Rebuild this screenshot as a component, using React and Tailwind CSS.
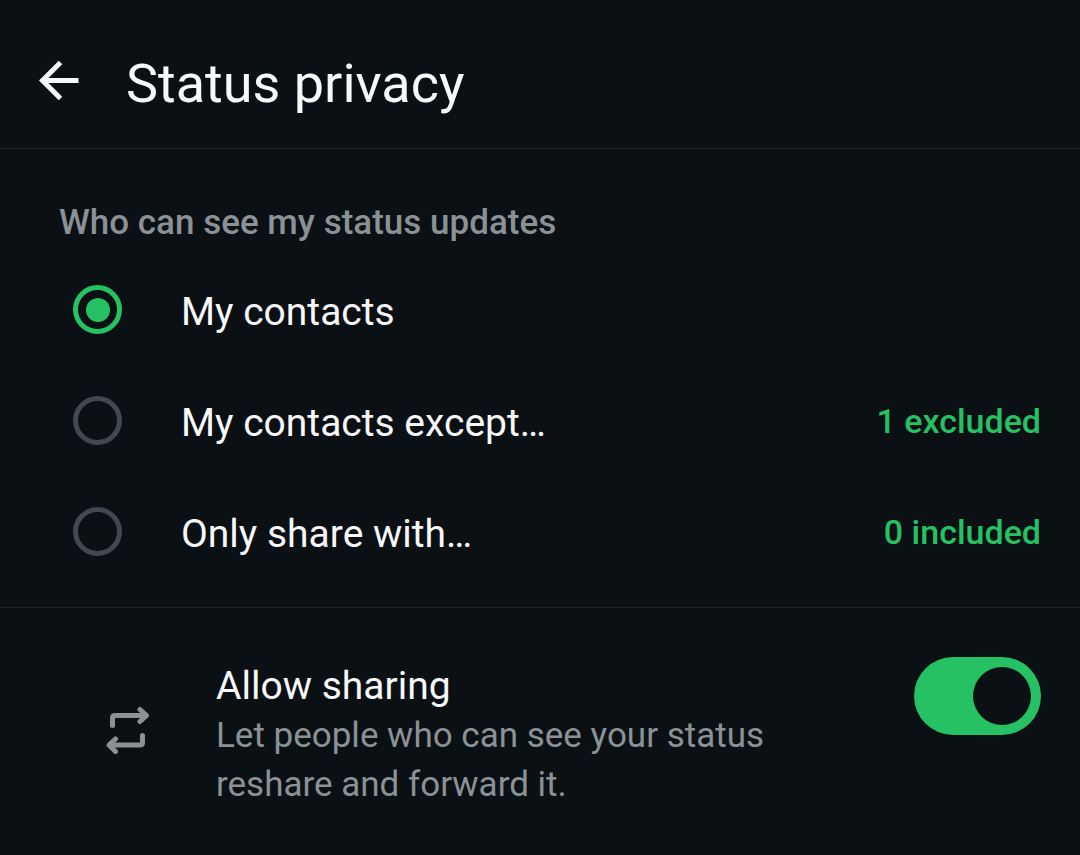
import { useState } from 'react'

const OPTIONS = [
  { id: 'contacts', label: 'My contacts' },
  { id: 'except', label: 'My contacts except…', action: '1 excluded' },
  { id: 'only', label: 'Only share with…', action: '0 included' },
]

function BackIcon() {
  return (
    <svg
      className="size-12"
      viewBox="0 0 48 48"
      fill="none"
      stroke="currentColor"
      strokeWidth="5"
      aria-hidden="true"
    >
      <path d="M43.500 24.500H9M25.500 6.500L7.500 24.500L25.500 42.500" />
    </svg>
  )
}

function ReshareIcon() {
  return (
    <svg
      className="size-12 shrink-0"
      viewBox="0 0 48 48"
      fill="none"
      stroke="currentColor"
      strokeWidth="5"
      strokeLinejoin="round"
      strokeLinecap="round"
      aria-hidden="true"
    >
      <path d="M8.500 19.500V12Q8.500 9.500 11 9.500H41" />
      <path d="M36 3.500L42.500 9.500L36 15.500" />
      <path d="M38.500 29.500V36.500Q38.500 39 36 39H7" />
      <path d="M11.500 33L5 39L11.500 45.500" />
    </svg>
  )
}

function OptionRow({ option, checked, onSelect }) {
  return (
    <div className="flex h-[111px] items-center justify-between pr-[39px] pl-[73px]">
      <label className="flex items-center gap-[59px]">
        <input
          type="radio"
          name="audience"
          value={option.id}
          checked={checked}
          onChange={() => onSelect(option.id)}
          className="grid size-[49px] shrink-0 appearance-none place-content-center rounded-full border-5 border-[#404950] before:size-6 before:rounded-full checked:border-[#25c162] checked:before:bg-[#25c162]"
        />
        <span className="pt-1 text-[39px] leading-[48px]">{option.label}</span>
      </label>
      {option.action && (
        <button
          type="button"
          className="text-[34px] leading-[48px] font-medium text-[#25c162]"
        >
          {option.action}
        </button>
      )}
    </div>
  )
}

export default function App() {
  const [audience, setAudience] = useState('contacts')
  const [sharing, setSharing] = useState(true)

  return (
    <div className="min-h-screen bg-[#0b1014] font-[Roboto,sans-serif] text-[#f7f8fa]">
      <header className="flex items-center gap-[43px] border-b border-[#1d2327] px-[35px] pt-12 pb-7">
        <button type="button" aria-label="Back" className="pb-2">
          <BackIcon />
        </button>
        <h1 className="text-[54px] leading-[72px]">Status privacy</h1>
      </header>

      <main>
        <fieldset className="border-b border-[#1d2327] pt-12 pb-5">
          <legend className="float-left w-full px-[59px] pb-[5px] text-[35px] leading-[52px] font-medium text-[#8a9296]">
            Who can see my status updates
          </legend>
          <div className="clear-both">
            {OPTIONS.map((option) => (
              <OptionRow
                key={option.id}
                option={option}
                checked={audience === option.id}
                onSelect={setAudience}
              />
            ))}
          </div>
        </fieldset>

        <section className="flex items-start pt-[49px] pr-[39px] pb-11 pl-[104px]">
          <div className="pt-[49px] text-[#8a9296]">
            <ReshareIcon />
          </div>
          <div className="ml-16 max-w-[600px] flex-1 pt-1">
            <label htmlFor="sharing" className="block text-[39px] leading-[50px]">
              Allow sharing
            </label>
            <p
              id="sharing-hint"
              className="text-[35px] leading-[49px] text-[#8a9296]"
            >
              Let people who can see your status reshare and forward it.
            </p>
          </div>
          <input
            id="sharing"
            type="checkbox"
            role="switch"
            aria-describedby="sharing-hint"
            checked={sharing}
            onChange={(e) => setSharing(e.target.checked)}
            className="ml-auto flex h-[78px] w-[127px] shrink-0 appearance-none items-center rounded-full bg-[#404950] px-2.5 before:size-[58px] before:rounded-full before:bg-[#0b1014] checked:justify-end checked:bg-[#25c162]"
          />
        </section>
      </main>
    </div>
  )
}
